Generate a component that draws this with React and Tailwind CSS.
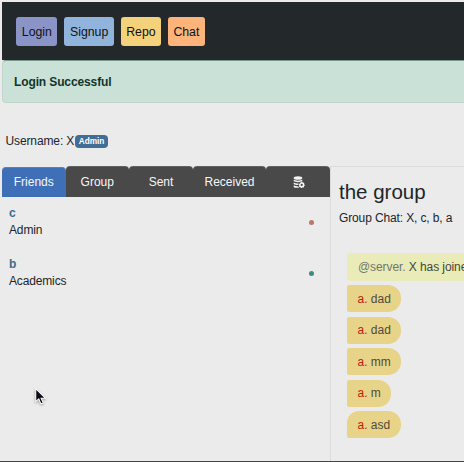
const navItems = [
  { label: "Login", cls: "w-[41px] bg-[#8b94c7]" },
  { label: "Signup", cls: "w-[49.500px] bg-[#90b4dc]" },
  { label: "Repo", cls: "w-[40px] bg-[#f3d27b]" },
  { label: "Chat", cls: "w-[37px] bg-[#fdb47a]" },
];

const tabs = [
  { label: "Friends", cls: "w-[63.500px] mt-px pb-[2px] border-[#6a7f9f] bg-[#3f70b7]" },
  { label: "Group", cls: "w-[63.500px] border-[#77777780] bg-[#494949]" },
  { label: "Sent", cls: "w-[64px] border-[#77777780] bg-[#494949]" },
  { label: "Received", cls: "w-[73px] border-[#77777780] bg-[#494949]" },
];

const friends = [
  { name: "c", role: "Admin", dot: "bg-[#bd756e]" },
  { name: "b", role: "Academics", dot: "bg-[#3f8b7c]" },
];

const messages = [
  { text: "dad", cls: "w-[54px] rounded-l-[2px]" },
  { text: "dad", cls: "w-[54px] rounded-l-[2px]" },
  { text: "mm", cls: "w-[54px] rounded-l-[2px]" },
  { text: "m", cls: "w-[44px] rounded-l-[2px]" },
  { text: "asd", cls: "w-[54px] rounded-tl-[12px] rounded-bl-[2px]" },
];

function DatabaseIcon() {
  return (
    <svg className="ml-px h-3 w-3" viewBox="0 0 12 12" fill="#f5f5f5">
      <ellipse cx="5" cy="2" rx="4.3" ry="1.8" />
      <path d="M.7 3.6C2.6 5 7.4 5 9.3 3.6v1.5C7.4 6.5 2.6 6.5.7 5.1z" />
      <path d="M.7 6.5c1.2.8 3 1.1 4.900.9L5.200 9C3.300 9 1.600 8.700.7 8z" />
      <path d="M.7 9.300c1.200.8 2.700 1 4.500.9l.7 1.500C3.800 12 1.600 11.700.7 10.900z" />
      <path
        fillRule="evenodd"
        d="M8.200 5.800h1.200l.3.900.9-.3.8 1-.5.8.9.5v1l-.9.400.2.9-1 .7-.7-.5-.6.700H7.800l-.4-.9-.9.200-.6-1 .5-.8-.6-.6.3-1.100.9-.1.100-.9.900-.1zM8.700 7.800a1.100 1.100 0 1 0 0 2.200 1.100 1.100 0 0 0 0-2.200z"
      />
    </svg>
  );
}

function Cursor() {
  return (
    <svg
      className="absolute left-[34px] top-[387px] h-[20px] w-[14px] drop-shadow-[0_1px_1px_rgba(0,0,0,0.35)]"
      viewBox="0 0 13 19"
    >
      <path
        d="M1.500 1.500v12.300l2.900-2.500 2 4.700 2.200-.9-2-4.500h4z"
        fill="#090b12"
        stroke="#fff"
        strokeWidth="1"
      />
    </svg>
  );
}

export default function App() {
  return (
    <div className="relative flex h-[462px] w-[464px] flex-col overflow-hidden border-b border-[#444] bg-[#ebebeb] pl-[2px] pt-[2px] font-['Liberation_Sans',Arial,sans-serif] text-[12px] leading-[18px] text-[#212529]">
      <nav className="flex h-[58px] shrink-0 gap-[7px] bg-[#23282b] pl-[14.400px] pt-[15px]">
        {navItems.map((n) => (
          <a
            key={n.label}
            className={`flex h-[29px] items-center justify-center rounded-[3px] text-[12.300px] text-[#101214] ${n.cls}`}
          >
            {n.label}
          </a>
        ))}
      </nav>
      <div className="flex h-[43px] shrink-0 items-center rounded-l-[4px] border border-r-0 border-[#c0d6cc] border-t-[#789a8c] bg-[#c9e1d7] pl-[11px] font-bold tracking-[-0.120px] text-[#12352a]">
        Login Successful
      </div>
      <div className="mt-[29px] flex h-[18px] shrink-0 items-center pl-[3.500px]">
        <span className="whitespace-nowrap tracking-[-0.120px]">Username: X</span>
        <span className="ml-px flex h-[13px] w-[32.500px] items-center justify-center rounded-[4px] bg-[#426e96] text-[8.300px] font-bold leading-none tracking-[-0.100px] text-white">
          Admin
        </span>
      </div>
      <main className="mt-4 flex min-h-0 flex-1">
        <section className="w-[328px] shrink-0">
          <div className="flex h-[31px] items-stretch">
            {tabs.map((t) => (
              <div
                key={t.label}
                className={`flex items-center justify-center rounded-t-[4px] border-t text-[12px] text-[#f7f7f7] ${t.cls}`}
              >
                {t.label}
              </div>
            ))}
            <div className="flex flex-1 items-center justify-center rounded-t-[4px] border-t border-[#77777780] bg-[#494949]">
              <DatabaseIcon />
            </div>
          </div>
          <div className="pt-[8px]">
            {friends.map((f) => (
              <div key={f.name} className="flex h-[51px] items-start justify-between pl-[7px] pr-[16px]">
                <div className="leading-[17px]">
                  <div className="font-bold text-[#426a8d]">{f.name}</div>
                  <div className="tracking-[-0.150px]">{f.role}</div>
                </div>
                <span className={`mt-[15px] h-[5px] w-[5px] rounded-full ${f.dot}`} />
              </div>
            ))}
          </div>
        </section>
        <section className="min-w-0 flex-1 border-l border-t border-[#dcdcdc] pl-[8px]">
          <h1 className="mt-[12px] text-[20.500px] leading-[25px]">the group</h1>
          <p className="mt-[5px] whitespace-nowrap text-[12px] tracking-[-0.130px]">Group Chat: X, c, b, a</p>
          <div className="ml-[7.500px] mt-[26px] flex flex-col items-start text-[12px]">
            <div className="flex h-[28px] w-[160px] items-center whitespace-pre rounded-l-[3px] bg-[#e9ecb8] pl-[11.500px] tracking-[-0.080px] text-[#45463d]">
              <span className="text-[#74756a]">@server.</span> X has joined
            </div>
            <div className="mt-[4px] flex flex-col items-start gap-[4.500px]">
              {messages.map((m, i) => (
                <div
                  key={i}
                  className={`flex h-[27px] items-center whitespace-pre rounded-r-[13px] bg-[#e7d488] pl-[11px] text-[#504b3b] ${m.cls}`}
                >
                  <span className="text-[#bd1c12]">a.</span>
                  <span>{` ${m.text}`}</span>
                </div>
              ))}
            </div>
          </div>
        </section>
      </main>
      <Cursor />
    </div>
  );
}
